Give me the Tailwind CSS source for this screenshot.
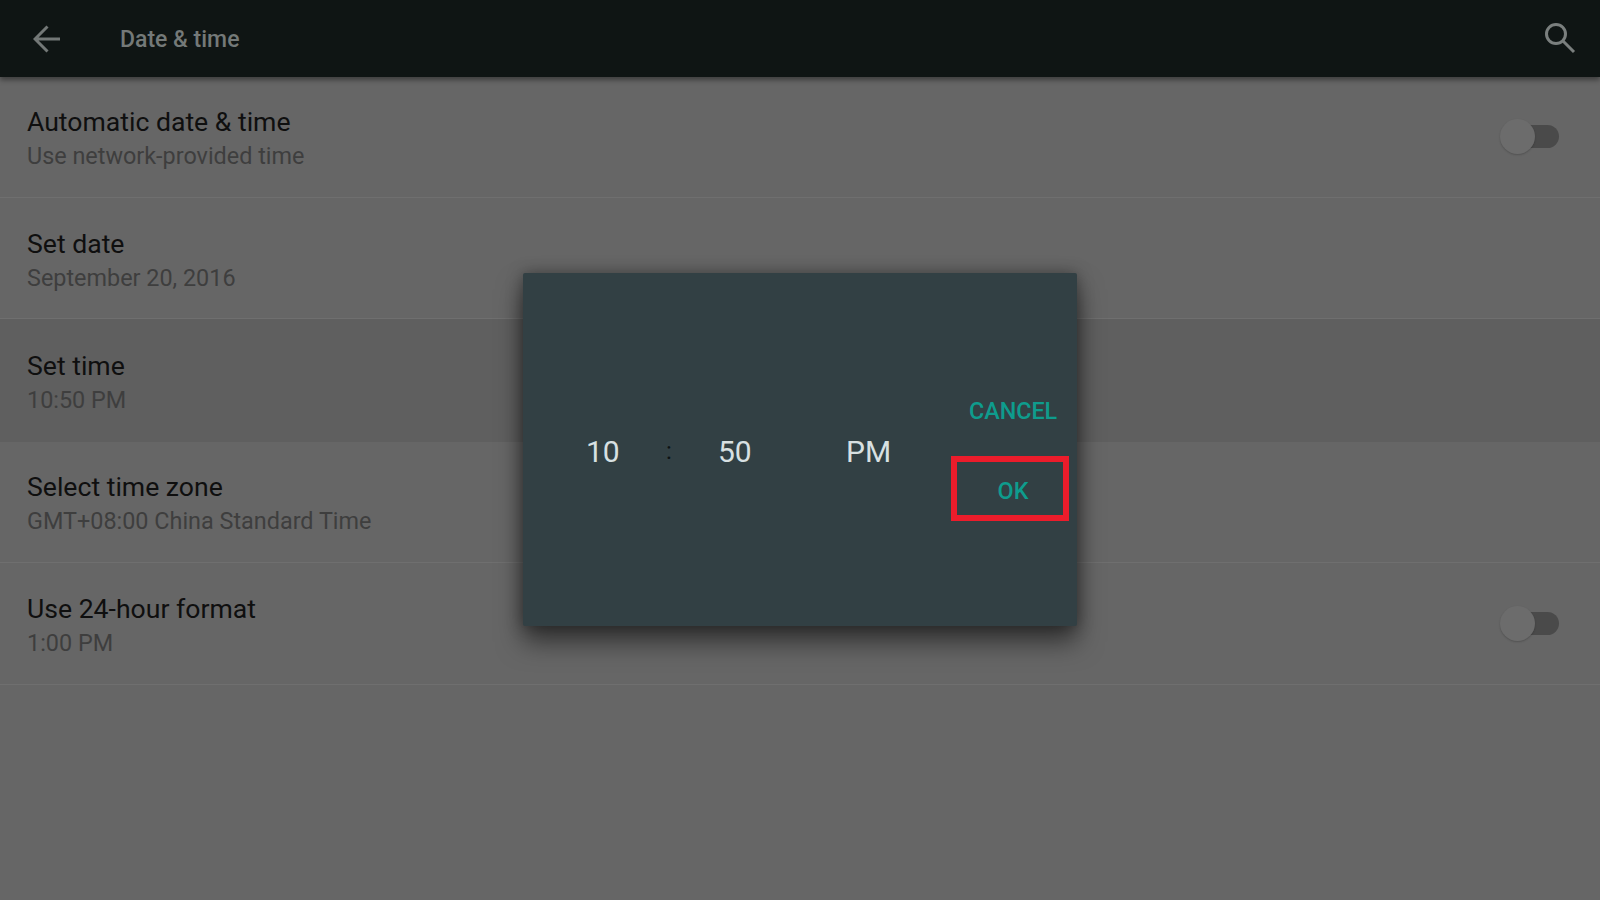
<!DOCTYPE html>
<html lang="en">
<head>
  <meta charset="UTF-8">
  <title>Date &amp; time</title>
  <script src="https://cdn.jsdelivr.net/npm/@tailwindcss/browser@4"></script>
</head>
<body class="relative w-[1600px] h-[900px] overflow-hidden bg-[#666666] font-['Roboto',sans-serif]">

  <!-- Toolbar -->
  <header class="relative z-10 flex items-center h-[77px] pl-[33px] pr-[24px] bg-[#0f1514] shadow-[0_3px_5px_rgba(0,0,0,0.4)]">
    <svg class="w-[28px] h-[28px]" viewBox="0 0 28 28" fill="none" stroke="#737877" stroke-width="3">
      <path d="M27 14H2M14.500 1.500L2 14l12.500 12.500"/>
    </svg>
    <h1 class="ml-[59px] pt-[4px] text-[23px] font-medium text-[#747978]">Date &amp; time</h1>
    <svg class="ml-auto mb-[2px] w-[32px] h-[32px]" viewBox="0 0 32 32" fill="none" stroke="#7a7f7e" stroke-width="3">
      <circle cx="12" cy="12" r="9.500"/>
      <path d="M19 19l11 11"/>
    </svg>
  </header>

  <!-- Settings -->
  <main>
    <div class="flex items-center justify-between h-[121px] pl-[27px] pr-[41px] border-b border-[#6f6f6f]">
      <div class="pt-[3px]">
        <div class="text-[26.600px] leading-[34px] text-[#0f0f0f]">Automatic date &amp; time</div>
        <div class="text-[23.400px] leading-[34px] text-[#3e3e3e]">Use network-provided time</div>
      </div>
      <div class="relative mb-[2px] w-[42px] h-[23px] rounded-full bg-[#4a4a4a]">
        <div class="absolute left-[-17px] top-[-6px] w-[35px] h-[35px] rounded-full bg-[#6c6c6c] shadow-[0_1px_2px_rgba(0,0,0,0.2)]"></div>
      </div>
    </div>
    <div class="flex items-center h-[121px] pl-[27px] border-b border-[#6f6f6f]">
      <div class="pt-[6px]">
        <div class="text-[26.600px] leading-[34px] text-[#0f0f0f]">Set date</div>
        <div class="text-[23.400px] leading-[34px] text-[#3e3e3e]">September 20, 2016</div>
      </div>
    </div>
    <div class="flex items-center h-[123px] pl-[27px] bg-[#5f5f5f]">
      <div class="pt-[4px]">
        <div class="text-[26.600px] leading-[34px] text-[#0f0f0f]">Set time</div>
        <div class="text-[23.400px] leading-[34px] text-[#3e3e3e]">10:50 PM</div>
      </div>
    </div>
    <div class="flex items-center h-[121px] pl-[27px] border-b border-[#6f6f6f]">
      <div class="pt-[4px]">
        <div class="text-[26.600px] leading-[34px] text-[#0f0f0f]">Select time zone</div>
        <div class="text-[23.400px] leading-[34px] text-[#3e3e3e]">GMT+08:00 China Standard Time</div>
      </div>
    </div>
    <div class="flex items-center justify-between h-[122px] pl-[27px] pr-[41px] border-b border-[#6f6f6f]">
      <div class="pt-[5px]">
        <div class="text-[26.600px] leading-[34px] text-[#0f0f0f]">Use 24-hour format</div>
        <div class="text-[23.400px] leading-[34px] text-[#3e3e3e]">1:00 PM</div>
      </div>
      <div class="relative mb-[1px] w-[42px] h-[23px] rounded-full bg-[#4a4a4a]">
        <div class="absolute left-[-17px] top-[-6px] w-[35px] h-[35px] rounded-full bg-[#6c6c6c] shadow-[0_1px_2px_rgba(0,0,0,0.2)]"></div>
      </div>
    </div>
  </main>

  <!-- Time picker dialog -->
  <div class="absolute z-20 left-[523px] top-[273px] w-[554px] h-[353px] flex rounded-[2px] bg-[#324044] shadow-[0_16px_26px_rgba(0,0,0,0.5),0_0_16px_rgba(0,0,0,0.35)]">
    <div class="relative flex-1 text-[30px] text-[#d8e0e2]">
      <span class="absolute left-[63px] top-[156px]">10</span>
      <span class="absolute left-[143px] top-[160px] text-[#0c1213] text-[24px]">:</span>
      <span class="absolute left-[195px] top-[156px]">50</span>
      <span class="absolute left-[323px] top-[156px]">PM</span>
    </div>
    <div class="w-[126px] flex flex-col pt-[121px] text-[23.300px] font-medium text-[#0e9c8d]">
      <span class="h-[34px] leading-[34px] pl-[18px]">CANCEL</span>
      <div class="mt-[28px] flex items-center justify-center w-[118px] h-[65px] pl-[6px] pt-[5px] border-[6px] border-[#ec1c2b]">OK</div>
    </div>
  </div>
</body>
</html>
